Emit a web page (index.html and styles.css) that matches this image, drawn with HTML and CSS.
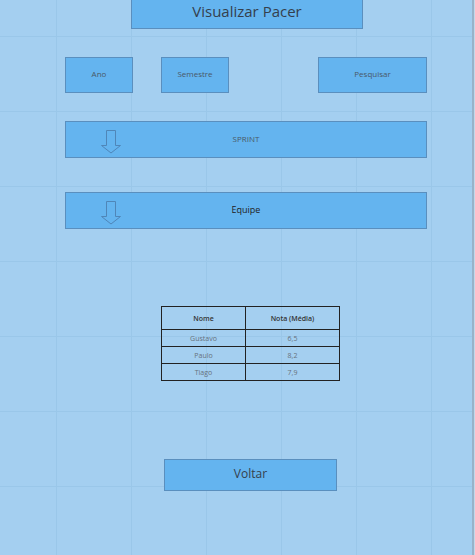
FILE: index.html
```html
<!DOCTYPE html>
<html lang="pt">
<head>
    <meta charset="UTF-8">
    <meta name="viewport" content="width=device-width, initial-scale=1.0">
    <title>Visualizar Pacer</title>
    <link rel="stylesheet" href="styles.css">
</head>
<body>
    <div class="page">
        <div class="title box">Visualizar Pacer</div>

        <div class="filters">
            <div class="box filter">Ano</div>
            <div class="box filter semestre">Semestre</div>
            <div class="box filter pesquisar">Pesquisar</div>
        </div>

        <div class="box dropdown sprint">
            <svg class="arrow" width="20" height="24" viewBox="0 0 20 24">
                <path d="M5.5 0.5 H14.5 V15.5 H19.5 L10 23 L0.5 15.5 H5.5 Z" fill="none" stroke="#4f86b8" stroke-width="1"/>
            </svg>
            <span class="label">SPRINT</span>
        </div>

        <div class="box dropdown equipe">
            <svg class="arrow" width="20" height="24" viewBox="0 0 20 24">
                <path d="M5.5 0.5 H14.5 V15.5 H19.5 L10 23 L0.5 15.5 H5.5 Z" fill="none" stroke="#4f86b8" stroke-width="1"/>
            </svg>
            <span class="label">Equipe</span>
        </div>

        <table class="notas">
            <colgroup>
                <col class="col-nome">
                <col>
            </colgroup>
            <tr>
                <th>Nome</th>
                <th>Nota (Média)</th>
            </tr>
            <tr>
                <td>Gustavo</td>
                <td>6,5</td>
            </tr>
            <tr>
                <td>Paulo</td>
                <td>8,2</td>
            </tr>
            <tr>
                <td>Tiago</td>
                <td>7,9</td>
            </tr>
        </table>

        <div class="box voltar">Voltar</div>
    </div>
</body>
</html>
```

FILE: styles.css
```css
html, body {
    margin: 0;
    padding: 0;
}
body {
    font-family: "Open Sans", "DejaVu Sans", sans-serif;
    background-color: #a4cff0;
    background-image:
        linear-gradient(to left, #c2d8ea 0 1px, #98b3c9 1px 3px, transparent 3px),
        linear-gradient(to right, #9ac7e9 0 1px, transparent 1px),
        linear-gradient(to bottom, #9ac7e9 0 1px, transparent 1px);
    background-size: 100% 100%, 75px 75px, 75px 75px;
    background-position: 0 0, 56px 0, 0 36px;
    background-repeat: no-repeat, repeat, repeat;
    width: 475px;
    height: 555px;
    overflow: hidden;
}
.page {
    display: flex;
    flex-direction: column;
    align-items: flex-start;
}
.box {
    box-sizing: border-box;
    background-color: #64b4ef;
    border: 1px solid #5a8fbe;
    display: flex;
    align-items: center;
    justify-content: center;
    color: #4a5968;
}
.title {
    margin-top: -1px;
    margin-left: 131px;
    width: 232px;
    height: 30px;
    font-size: 15px;
    color: #34404d;
    padding-bottom: 7px;
}
.filters {
    display: flex;
    margin-top: 28px;
    margin-left: 65px;
}
.filter {
    width: 68px;
    height: 36px;
    font-size: 8px;
    padding-bottom: 3px;
}
.semestre {
    margin-left: 28px;
}
.pesquisar {
    margin-left: 89px;
    width: 109px;
}
.dropdown {
    display: grid;
    grid-template-columns: 1fr auto 1fr;
    align-items: center;
    margin-left: 65px;
    width: 362px;
    height: 37px;
}
.dropdown .arrow {
    justify-self: start;
    margin-left: 35px;
    margin-top: 4px;
}
.dropdown .label {
    grid-column: 2;
    margin-top: -3px;
}
.sprint {
    margin-top: 28px;
    font-size: 8px;
}
.equipe {
    margin-top: 34px;
    font-size: 9px;
    color: #222;
}
.notas {
    margin-top: 77px;
    margin-left: 161px;
    width: 179px;
    table-layout: fixed;
    border-collapse: collapse;
    border: 1.5px solid #222;
    font-size: 7px;
    color: #66717c;
    text-align: center;
}
.col-nome {
    width: 84px;
}
.notas th, .notas td {
    border: 1px solid #222;
    padding: 0;
}
.notas th {
    height: 22px;
    color: #333;
    font-weight: 600;
}
.notas td {
    height: 16px;
}
.voltar {
    margin-top: 78px;
    margin-left: 164px;
    width: 173px;
    height: 32px;
    font-size: 12px;
    color: #34404d;
    padding-bottom: 3px;
}
```
